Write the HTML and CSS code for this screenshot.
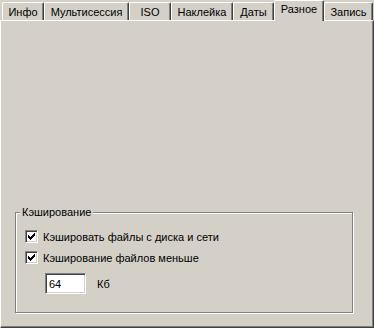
FILE: index.html
```html
<!DOCTYPE html>
<html lang="ru">
<head>
<meta charset="utf-8">
<title>Разное</title>
<link rel="stylesheet" href="styles.css">
</head>
<body>
<div class="window">
  <div class="tabs">
    <div class="tab t-info">Инфо</div>
    <div class="tab t-multi">Мультисессия</div>
    <div class="tab t-iso">ISO</div>
    <div class="tab t-label">Наклейка</div>
    <div class="tab t-dates">Даты</div>
    <div class="tab tab-active t-misc">Разное</div>
    <div class="tab t-rec">Запись</div>
  </div>
  <div class="panel">
    <div class="group">
      <span class="legend">Кэширование</span>
      <div class="row">
        <span class="check"><svg width="7" height="7" viewBox="0 0 7 7" shape-rendering="crispEdges"><path d="M6 0h1v1h-1z M5 1h2v1h-2z M0 2h1v1h-1z M4 2h3v1h-3z M0 3h2v1h-2z M3 3h3v1h-3z M0 4h5v1h-5z M1 5h3v1h-3z M2 6h1v1h-1z" fill="#000"/></svg></span>
        <span>Кэшировать файлы с диска и сети</span>
      </div>
      <div class="row row-2">
        <span class="check"><svg width="7" height="7" viewBox="0 0 7 7" shape-rendering="crispEdges"><path d="M6 0h1v1h-1z M5 1h2v1h-2z M0 2h1v1h-1z M4 2h3v1h-3z M0 3h2v1h-2z M3 3h3v1h-3z M0 4h5v1h-5z M1 5h3v1h-3z M2 6h1v1h-1z" fill="#000"/></svg></span>
        <span>Кэширование файлов меньше</span>
      </div>
      <div class="size-row">
        <span class="edit">64</span>
        <span class="unit">Кб</span>
      </div>
    </div>
  </div>
</div>
</body>
</html>
```
FILE: styles.css
```css
html, body {
  margin: 0;
  background: #d4d0c8;
}
body {
  font-family: "Liberation Sans", Arial, sans-serif;
  font-size: 11px;
  color: #000;
}
.window {
  width: 374px;
  height: 328px;
  display: flex;
  flex-direction: column;
}
.tabs {
  display: flex;
  align-items: flex-end;
  height: 20px;
  padding-left: 2px;
  position: relative;
  z-index: 1;
  flex: none;
}
.tab {
  box-sizing: border-box;
  height: 18px;
  padding-top: 1px;
  border: 1px solid #fff;
  border-bottom: 0;
  border-right-color: #404040;
  box-shadow: inset -1px 0 #808080;
  border-radius: 2px 2px 0 0;
  text-align: center;
  line-height: 16px;
  white-space: nowrap;
  background: #d4d0c8;
}
.tab-active {
  height: 21px;
  padding-top: 0;
  margin-bottom: -1px;
}
.t-info { width: 42px; }
.t-multi { width: 85px; }
.t-iso { width: 42px; }
.t-label { width: 62px; }
.t-dates { width: 41px; }
.t-misc { width: 50px; }
.t-rec { width: 49px; }

.panel {
  box-sizing: border-box;
  flex: 1;
  border-top: 1px solid #fff;
  border-left: 1px solid #fff;
  border-right: 1px solid #404040;
  border-bottom: 1px solid #404040;
  box-shadow: inset -1px -1px #808080;
  display: flex;
  flex-direction: column;
  justify-content: flex-end;
  padding: 0 0 14px 14px;
}
.group {
  box-sizing: border-box;
  position: relative;
  width: 338px;
  height: 101px;
  border: 1px solid #808080;
  box-shadow: 1px 1px 0 #fff, inset 1px 1px 0 #fff;
  padding: 17px 0 0 9px;
}
.legend {
  position: absolute;
  top: -7px;
  left: 4px;
  padding: 0 2px;
  line-height: 13px;
  background: #d4d0c8;
}
.row {
  display: flex;
  align-items: center;
  height: 13px;
  white-space: nowrap;
}
.row-2 {
  margin-top: 8px;
}
.check {
  box-sizing: border-box;
  flex: none;
  width: 13px;
  height: 13px;
  margin-right: 5px;
  background: #fff;
  border: 1px solid;
  border-color: #808080 #fff #fff #808080;
  box-shadow: inset 1px 1px #404040, inset -1px -1px #d4d0c8;
}
.check svg {
  display: block;
  margin: 2px 0 0 2px;
}
.size-row {
  display: flex;
  align-items: center;
  margin-top: 9px;
  padding-left: 20px;
}
.edit {
  box-sizing: border-box;
  display: flex;
  align-items: center;
  width: 41px;
  height: 21px;
  padding-left: 3px;
  background: #fff;
  border: 1px solid;
  border-color: #808080 #fff #fff #808080;
  box-shadow: inset 1px 1px #404040, inset -1px -1px #d4d0c8;
}
.unit {
  margin-left: 11px;
}
```
